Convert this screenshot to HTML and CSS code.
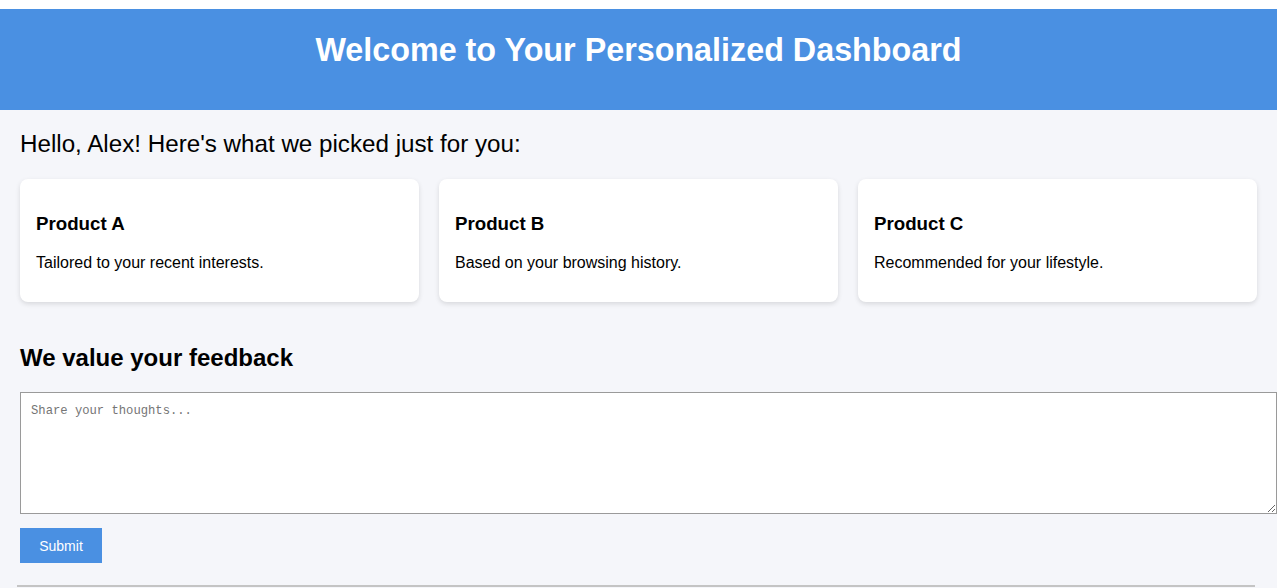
FILE: index.html
```html
<!DOCTYPE html>
<html lang="en">
<head>
<meta charset="utf-8">
<title>Personalized Dashboard</title>
<link rel="stylesheet" href="styles.css">
</head>
<body>
<div class="page">
  <header class="site-header">
    <h1>Welcome to Your Personalized Dashboard</h1>
  </header>
  <main class="content">
    <p class="greeting">Hello, Alex! Here's what we picked just for you:</p>
    <section class="cards">
      <div class="card">
        <h3>Product A</h3>
        <p>Tailored to your recent interests.</p>
      </div>
      <div class="card">
        <h3>Product B</h3>
        <p>Based on your browsing history.</p>
      </div>
      <div class="card">
        <h3>Product C</h3>
        <p>Recommended for your lifestyle.</p>
      </div>
    </section>
    <section class="feedback">
      <h2>We value your feedback</h2>
      <textarea class="feedback-input" placeholder="Share your thoughts..."></textarea>
      <button class="submit-btn" type="button">Submit</button>
    </section>
    <div class="bottom-line"></div>
  </main>
</div>
</body>
</html>
```

FILE: styles.css
```css
html, body {
  margin: 0;
  padding: 0;
  background: #ffffff;
}

body {
  font-family: "Liberation Sans", Arial, sans-serif;
  color: #000;
  overflow: hidden;
}

.page {
  width: 1277px;
  padding-top: 9px;
  background: #ffffff;
  box-sizing: border-box;
}

.site-header {
  background: #4a90e2;
  color: #fff;
  height: 101px;
  box-sizing: border-box;
  padding-top: 23px;
  text-align: center;
}

.site-header h1 {
  margin: 0;
  font-size: 32.3px;
  font-weight: bold;
  line-height: normal;
}

.content {
  background: #f5f6fa;
  padding: 20px 20px 0;
}

.greeting {
  margin: 0 0 21px;
  font-size: 24.2px;
  line-height: normal;
}

.cards {
  display: flex;
  gap: 20px;
}

.card {
  flex: 1;
  background: #fff;
  border-radius: 8px;
  box-shadow: 0 2px 5px rgba(0, 0, 0, 0.12);
  padding: 34px 16px 30px;
  height: 123px;
  box-sizing: border-box;
}

.card h3 {
  margin: 0 0 19px;
  font-size: 18.72px;
  line-height: normal;
}

.card p {
  margin: 0;
  font-size: 16px;
  line-height: normal;
}

.feedback h2 {
  margin: 42px 0 20px;
  font-size: 24px;
  line-height: normal;
}

.feedback-input {
  display: block;
  width: 1257px;
  height: 122px;
  box-sizing: border-box;
  padding: 11px 10px 10px;
  border: 1px solid #9a9a9a;
  border-radius: 0;
  background: #fff;
  font-family: "Liberation Mono", monospace;
  font-size: 12.2px;
  resize: vertical;
}

.feedback-input::placeholder {
  color: #757575;
}

.submit-btn {
  display: block;
  margin-top: 14px;
  width: 82px;
  height: 35px;
  background: #4a90e2;
  color: #fff;
  border: none;
  font-family: "Liberation Sans", Arial, sans-serif;
  font-size: 14px;
  padding: 0;
}

.bottom-line {
  margin: 22px 0 0 -3px;
  width: 1238px;
  border-top: 2px solid #c4c4c4;
  height: 4px;
}
```
